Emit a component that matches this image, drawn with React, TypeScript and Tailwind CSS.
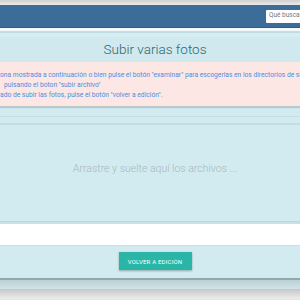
import React from 'react';

const App = () => {
  return (
    <div className="w-[300px] h-[300px] overflow-hidden bg-[#d1ebf0] font-['Roboto',sans-serif]">
      <div className="h-[5px] bg-gradient-to-b from-[#cfcfcf] to-[#ececec]" />
      <nav className="h-[23px] bg-[#3b6d98] flex items-center justify-end border-b border-[#2f5d85]">
        <div className="w-[34px] h-[13px] bg-white rounded-l-[1px] flex items-center pl-[3px] overflow-hidden">
          <span className="text-[6.5px] text-[#777] whitespace-nowrap">Qué buscas</span>
        </div>
      </nav>
      <div className="h-[3px] bg-[#f4f9fa]" />
      <div className="h-[2px] bg-[#bfdde4]" />
      <div className="h-[4px] bg-[#d6eef2]" />
      <main className="w-[310px] flex flex-col">
        <h1 className="h-[25px] flex items-center justify-center text-[13.5px] font-light text-[#2f6572] bg-[#cfe9ef]">
          Subir varias fotos
        </h1>
        <div className="bg-[#fce7e5] h-[45px] pt-[8px] text-[6.7px] leading-[10px] text-[#4a8fe0] whitespace-nowrap overflow-hidden border-b border-[#b9c9cc] shadow-[0_1px_1px_rgba(0,0,0,0.15)]">
          <p>ona mostrada a continuación o bien pulse el botón "examinar" para escogerlas en los directorios de su ordenador.</p>
          <p className="pl-[4px]">pulsando el boton "subir archivo"</p>
          <p>ado de subir las fotos, pulse el botón "volver a edición".</p>
        </div>
        <div className="h-[9px]" />
        <div className="h-[7px] border-t border-[#c2dfe6]" />
        <div className="border-t-2 border-[#c3dde4] h-[89px] flex items-center justify-center">
          <span className="text-[10.5px] font-light text-[#a9b8bb]">Arrastre y suelte aquí los archivos ...</span>
        </div>
        <div className="h-[10px] border-b border-[#bcd8df]" />
        <div className="h-[24px] bg-white border-t-2 border-[#c2dde3] border-b border-[#c8e0e6]" />
        <div className="h-[32px] flex items-start justify-center pt-[6px]">
          <button className="w-[73px] h-[18px] bg-[#2ab6a6] text-white text-[6px] tracking-[0.2px] shadow-[0_1px_2px_rgba(0,0,0,0.3)] flex items-center justify-center">
            VOLVER A EDICIÓN
          </button>
        </div>
        <div className="h-[2px] bg-[#8fa9ae]" />
        <div className="h-[9px] bg-gradient-to-b from-[#bccfd3] to-[#cfe4e9]" />
        <div className="h-[10px] bg-gradient-to-b from-[#c6c6c6] to-[#ededed]" />
      </main>
    </div>
  );
};

export default App;
